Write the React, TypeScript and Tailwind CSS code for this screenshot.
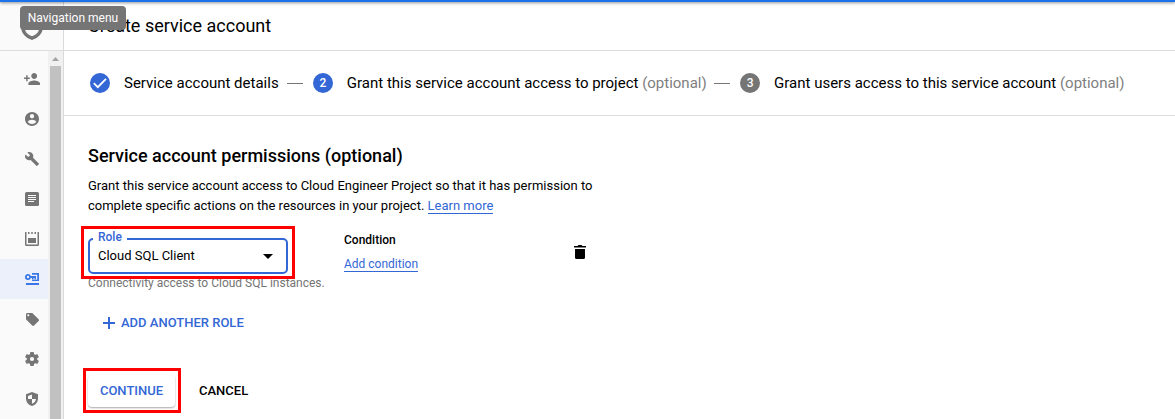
import type { ReactNode } from "react";

function Glyph({ children, className = "" }: { children: ReactNode; className?: string }) {
  return (
    <svg viewBox="0 0 18 18" className={`h-[18px] w-[18px] shrink-0 fill-current ${className}`}>
      {children}
    </svg>
  );
}

const navItems: { name: string; active?: boolean; icon: ReactNode }[] = [
  {
    name: "IAM",
    icon: (
      <path
        transform="translate(.25 0) scale(.73 .75)"
        d="M15 12c2.21 0 4-1.79 4-4s-1.79-4-4-4-4 1.79-4 4 1.79 4 4 4zm-9-2V7H4v3H1v2h3v3h2v-3h3v-2H6zm9 4c-2.67 0-8 1.34-8 4v2h16v-2c0-2.66-5.33-4-8-4z"
      />
    ),
  },
  {
    name: "Identity",
    icon: (
      <path
        transform="translate(.6 .6) scale(.7)"
        d="M12 2C6.48 2 2 6.48 2 12s4.48 10 10 10 10-4.48 10-10S17.52 2 12 2zm0 3c1.66 0 3 1.34 3 3s-1.34 3-3 3-3-1.34-3-3 1.34-3 3-3zm0 14.2c-2.5 0-4.71-1.28-6-3.22.03-1.99 4-3.08 6-3.08 1.99 0 5.97 1.09 6 3.08-1.29 1.94-3.5 3.22-6 3.22z"
      />
    ),
  },
  {
    name: "Troubleshooter",
    icon: (
      <path
        transform="translate(1.4 1.4) scale(.635)"
        d="M22.7 19l-9.1-9.1c.9-2.3.4-5-1.5-6.9-2-2-5-2.4-7.4-1.3L9 6 6 9 1.6 4.7C.4 7.1.9 10.1 2.9 12.1c1.9 1.9 4.6 2.4 6.9 1.5l9.1 9.1c.4.4 1 .4 1.4 0l2.3-2.3c.5-.4.5-1.1.1-1.4z"
      />
    ),
  },
  {
    name: "Organization policies",
    icon: (
      <path
        fillRule="evenodd"
        d="M3.5 2h11A1.5 1.5 0 0 1 16 3.500v11a1.500 1.500 0 0 1-1.500 1.500h-11A1.500 1.500 0 0 1 2 14.500v-11A1.500 1.500 0 0 1 3.500 2zM5 5v1h8V5zM5 7v1h8V7zM5 9v1h8V9zM5 11v1h6v-1z"
      />
    ),
  },
  {
    name: "Quotas",
    icon: (
      <path d="M2 2h1.500v12.500h11V2H16v12.500a1.500 1.500 0 0 1-1.500 1.500h-11A1.500 1.500 0 0 1 2 14.500zM5 2h1.500v2H5zM8.250 2h1.500v2h-1.500zM11.500 2H13v2h-1.500zM5 8h8v5H5z" />
    ),
  },
  {
    name: "Service accounts",
    active: true,
    icon: (
      <>
        <path
          fillRule="evenodd"
          d="M5 4a3 3 0 0 1 2.830 2H13v3.500h-1.500V8h-1v1.500H9V8H7.830A3 3 0 1 1 5 4zm0 1.800a1.200 1.200 0 1 0 0 2.400 1.200 1.200 0 0 0 0-2.400z"
        />
        <path d="M9 3h7v8H9V9.800h5.200V4.800H9zM3 13h13v2H3z" />
      </>
    ),
  },
  {
    name: "Labels",
    icon: (
      <path
        transform="translate(1.700 1.700) scale(.65)"
        d="M21.410 11.580l-9-9C12.050 2.220 11.550 2 11 2H4c-1.100 0-2 .9-2 2v7c0 .55.220 1.050.590 1.420l9 9c.36.36.86.580 1.410.580.55 0 1.050-.220 1.410-.590l7-7c.370-.360.590-.860.590-1.410 0-.55-.230-1.060-.590-1.420zM5.500 7C4.670 7 4 6.330 4 5.500S4.670 4 5.500 4 7 4.670 7 5.500 6.330 7 5.500 7z"
      />
    ),
  },
  {
    name: "Settings",
    icon: (
      <path
        transform="translate(.600 .600) scale(.7)"
        d="M19.430 12.980c.040-.320.070-.640.070-.980s-.030-.660-.070-.980l2.110-1.650c.190-.150.240-.420.120-.640l-2-3.460c-.120-.220-.390-.300-.610-.220l-2.490 1c-.520-.400-1.080-.730-1.690-.980l-.380-2.650C14.460 2.180 14.250 2 14 2h-4c-.250 0-.460.180-.490.420l-.380 2.650c-.610.250-1.170.590-1.690.980l-2.490-1c-.230-.090-.490 0-.610.220l-2 3.460c-.130.220-.070.490.120.640l2.110 1.650c-.040.320-.070.650-.070.980s.030.660.070.980l-2.110 1.650c-.190.150-.240.420-.120.640l2 3.460c.120.220.390.300.610.220l2.490-1c.520.400 1.080.730 1.690.980l.380 2.650c.030.240.240.420.490.420h4c.250 0 .460-.180.490-.420l.380-2.650c.610-.250 1.170-.590 1.690-.980l2.490 1c.230.090.490 0 .610-.220l2-3.460c.120-.220.070-.490-.120-.640l-2.110-1.650zM12 15a3 3 0 1 1 0-6 3 3 0 0 1 0 6z"
      />
    ),
  },
  {
    name: "Privacy",
    icon: (
      <path
        fillRule="evenodd"
        d="M9 2l6 2.200v4.300c0 3.500-2.500 6.600-6 7.500-3.500-.9-6-4-6-7.500V4.200zM9 4.500L5 6v3h4zM9 9v4.800c2.200-.7 3.700-2.500 4-4.800z"
      />
    ),
  },
];

function Divider({ className }: { className: string }) {
  return <span className={`mr-[10px] h-px w-4 bg-[#757575] ${className}`} />;
}

function StepBadge({ done, n, muted }: { done?: boolean; n: number; muted?: boolean }) {
  return (
    <span
      className={`mr-[14px] flex h-5 w-5 shrink-0 items-center justify-center rounded-full text-xs font-medium text-white ${
        muted ? "bg-[#757575]" : "bg-[#3367d6]"
      }`}
    >
      {done ? (
        <svg viewBox="0 0 20 20" className="h-5 w-5">
          <path d="M3.800 10.200l4 4 8.200-8.400" fill="none" stroke="white" strokeWidth="1.800" />
        </svg>
      ) : (
        n
      )}
    </span>
  );
}

function Sidebar() {
  return (
    <aside className="flex w-16 shrink-0 flex-col border-r border-[#dadada] bg-[#fafafa]">
      <div className="flex h-[51px] shrink-0 items-end justify-center border-b border-[#dedede] pb-[10px]">
        <svg viewBox="0 0 22 26" className="h-[26px] w-[22px]">
          <path d="M11 1.500L20.300 5v8c0 5-4 9.300-9.300 11.200C5.700 22.300 1.700 18 1.700 13V5z" fill="none" stroke="#757575" strokeWidth="3.500" />
        </svg>
      </div>
      <div className="flex min-h-0 grow">
        <nav className="w-12 shrink-0 overflow-hidden pt-2">
          {navItems.map((item) => (
            <a
              key={item.name}
              className={`flex h-10 items-center pl-[23px] ${
                item.active ? "bg-[#ebf0fb] text-[#3b78e7]" : "text-[#757575]"
              }`}
            >
              <Glyph>{item.icon}</Glyph>
            </a>
          ))}
        </nav>
        <div className="flex w-[15px] flex-col items-center bg-[#f1f1f1]">
          <svg viewBox="0 0 15 15" className="h-[15px] w-[15px] shrink-0 fill-[#a3a3a3]">
            <path d="M4 10h7L7.500 6z" />
          </svg>
          <div className="w-[11px] grow bg-[#c1c1c1]" />
        </div>
      </div>
    </aside>
  );
}

export default function App() {
  return (
    <div className="relative flex h-[419px] w-[1175px] overflow-hidden bg-white font-['Roboto',sans-serif] text-[13px] leading-5 text-black">
      <Sidebar />
      <div className="flex grow flex-col">
        <header className="flex h-[51px] shrink-0 items-center border-b border-[#dedede] pl-6 text-lg">
          <h1 className="pt-px">Create service account</h1>
        </header>

        <div className="flex h-[65px] shrink-0 items-center border-b border-[#dedede] pl-[26px] text-[15px] whitespace-nowrap">
          <StepBadge done n={1} />
          <span>Service account details</span>
          <Divider className="ml-[8.200px]" />
          <StepBadge n={2} />
          <span>
            Grant this service account access to project <span className="text-[#808080]">(optional)</span>
          </span>
          <Divider className="ml-[7.400px]" />
          <StepBadge n={3} muted />
          <span>
            Grant users access to this service account <span className="text-[#808080]">(optional)</span>
          </span>
        </div>

        <main className="pl-6">
          <h2 className="mt-[28px] text-lg leading-6 font-medium">Service account permissions (optional)</h2>
          <p className="mt-2 w-[520px]">
            Grant this service account access to Cloud Engineer Project so that it has permission to
            <br />
            complete specific actions on the resources in your project.{" "}
            <a className="border-b border-[#3367d6] text-[#3367d6]">Learn more</a>
          </p>

          <div className="mt-[22px] flex h-[54px]">
            <div className="w-64">
              <div className="relative flex h-9 w-[200px] items-center justify-between rounded-[5px] border-2 border-[#3367d6] pr-[13px] pl-2">
                <span className="absolute -top-[11px] left-[3px] bg-white px-[5px] text-xs font-medium text-[#3367d6]">
                  Role
                </span>
                <span>Cloud SQL Client</span>
                <svg viewBox="0 0 10 5" className="h-[5px] w-[10px]">
                  <path d="M0 0h10L5 5z" />
                </svg>
              </div>
              <p className="-mt-px text-xs leading-5 text-[#757575]">Connectivity access to Cloud SQL instances.</p>
            </div>
            <div className="-mt-[6px] flex w-[227px] flex-col items-start">
              <div className="text-xs leading-4 font-medium">Condition</div>
              <a className="mt-[10px] border-b border-[#3367d6] text-xs leading-[13px] text-[#3367d6]">Add condition</a>
            </div>
            <Glyph className="mt-[5px]">
              <path d="M4 6h10v8.500a1.500 1.500 0 0 1-1.500 1.500h-7A1.500 1.500 0 0 1 4 14.500zM3 3h3.500l1-1h3l1 1H15v1.500H3z" />
            </Glyph>
          </div>

          <button className="mt-[21px] ml-[15px] flex h-5 items-center gap-[6px] font-medium text-[#3367d6]">
            <svg viewBox="0 0 12 12" className="-mt-px h-3 w-3 fill-current">
              <path d="M5 0h2v5h5v2H7v5H5V7H0V5h5z" />
            </svg>
            ADD ANOTHER ROLE
          </button>

          <div className="mt-[42px] flex">
            <button className="h-8 w-[87px] rounded bg-white font-medium text-[#3367d6] shadow-[0_1px_2px_rgba(0,0,0,0.35)]">
              CONTINUE
            </button>
            <button className="ml-6 font-medium">CANCEL</button>
          </div>
        </main>
      </div>

      <div className="absolute top-0 left-0 h-[2px] w-full bg-[#1a73e8] shadow-[0_1px_3px_rgba(0,0,0,0.5)]" />
      <div className="absolute top-[6px] left-5 flex h-6 w-[106px] items-center justify-center rounded bg-[#757575] text-xs text-white">
        Navigation menu
      </div>
      <div className="absolute top-[226px] left-[81px] h-[53px] w-[214px] border-3 border-[#fe0000]" />
      <div className="absolute top-[368px] left-[83px] h-[45px] w-[98px] border-3 border-[#fe0000]" />
    </div>
  );
}
